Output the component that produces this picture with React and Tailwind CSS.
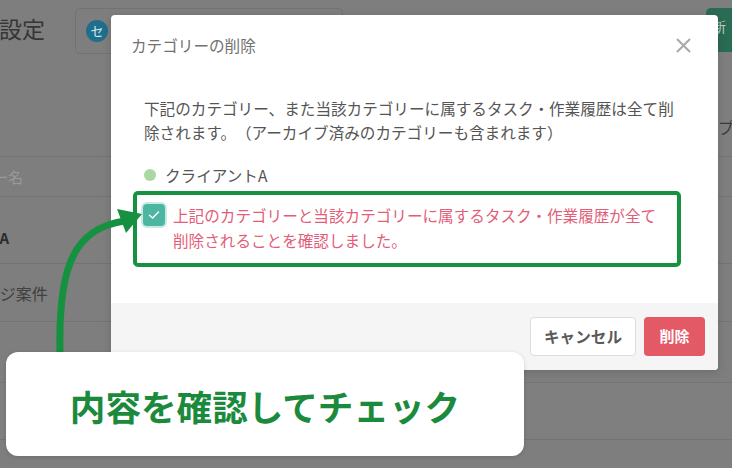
import React from "react";

const font = { fontFamily: '"Noto Sans CJK JP", "Noto Sans", sans-serif' };

export default function App() {
  return (
    <div
      className="relative w-[732px] h-[468px] overflow-hidden bg-[#7e7e7e] [text-spacing-trim:space-all]"
      style={font}
    >
      {/* background page (under dark overlay) */}
      <div className="flex flex-col w-[732px]">
        <div className="flex items-start h-[60px]">
          <div className="mt-[12px] ml-[-1px] text-[23px] leading-[32px] text-[#363636] whitespace-nowrap">
            設定
          </div>
          <div className="ml-[30px] mt-[8px] w-[268px] h-[46px] shrink-0 rounded-[5px] border border-[#727272] flex items-center pl-[10px]">
            <div className="w-[22px] h-[22px] rounded-full bg-[#1f6e8c] text-[#d8e6ec] text-[13px] leading-[22px] flex items-center justify-center">
              セ
            </div>
          </div>
          <div className="ml-[363px] mt-[8px] w-[40px] h-[44px] shrink-0 rounded-[5px] bg-[#2a6b54] text-[#b9cfc6] text-[14px] leading-[36px] pl-[6px]">
            新
          </div>
        </div>
        <div className="h-[97px] border-b border-[#737373] flex items-end pb-[17px]">
          <div className="ml-[686px] text-[16px] leading-[24px] text-[#3a3a3a] whitespace-nowrap">
            タイプ
          </div>
        </div>
        <div className="h-[40px] border-b border-[#737373] flex items-center">
          <div className="ml-[-67px] text-[15px] leading-[24px] text-[#9a9a9a] whitespace-nowrap">
            カテゴリー名
          </div>
        </div>
        <div className="h-[67px] border-b border-[#737373] pt-[29px]">
          <div className="ml-[-90px] text-[15px] leading-[24px] font-bold text-[#2c2c2c] whitespace-nowrap">
            クライアントA
          </div>
        </div>
        <div className="h-[58px] border-b border-[#737373] flex items-center">
          <div className="ml-[-32px] text-[16px] leading-[24px] text-[#404040] whitespace-nowrap">
            ページ案件
          </div>
        </div>
        <div className="h-[61px] border-b border-[#757575]" />
        <div className="h-[57px] border-b border-[#737373] bg-[#7f7f7f]" />
      </div>

      {/* modal */}
      <div className="absolute left-[111px] top-[15px] w-[607px] h-[355px] bg-white rounded-[4px] flex flex-col overflow-hidden shadow-[0_2px_8px_rgba(0,0,0,0.15)]">
        <div className="flex items-center justify-between pl-[20px] pr-[27px] pt-[18px]">
          <div className="text-[15.6px] leading-[24px] text-[#717171]">
            カテゴリーの削除
          </div>
          <svg width="15" height="15" viewBox="0 0 15 15">
            <path
              d="M1 1 L14 14 M14 1 L1 14"
              stroke="#a9a9a9"
              strokeWidth="2"
              fill="none"
            />
          </svg>
        </div>
        <div className="pl-[33px] pt-[39px] flex flex-col">
          <p className="w-[540px] text-[15.6px] leading-[24px] text-[#555555]">
            下記のカテゴリー、また当該カテゴリーに属するタスク・作業履歴は全て削除されます。（アーカイブ済みのカテゴリーも含まれます）
          </p>
          <div className="mt-[19px] flex items-center">
            <div className="w-[12px] h-[12px] rounded-full bg-[#a9d8a3]" />
            <div className="ml-[9px] text-[15.6px] leading-[24px] text-[#555555]">
              クライアントA
            </div>
          </div>
          <div className="relative mt-[16px] flex items-start">
            <div className="mt-[1px] ml-[-1px] w-[22px] h-[22px] shrink-0 rounded-[4px] bg-[#4db6a1] shadow-[0_0_0_2px_rgba(77,182,161,0.3)] flex items-center justify-center">
              <svg width="12" height="10" viewBox="0 0 12 10">
                <path
                  d="M1.5 5.2 L4.6 8 L10.5 2"
                  stroke="#ffffff"
                  strokeWidth="1.4"
                  fill="none"
                  strokeLinecap="round"
                  strokeLinejoin="round"
                />
              </svg>
            </div>
            <div className="ml-[8px] w-[490px] text-[15.6px] leading-[25px] text-[#e35d78]">
              上記のカテゴリーと当該カテゴリーに属するタスク・作業履歴が全て削除されることを確認しました。
            </div>
            <div className="absolute left-[-11px] top-[-12px] bottom-[-14px] w-[548px] border-[4px] border-[#16913f] rounded-[5px]" />
          </div>
        </div>
        <div className="mt-auto h-[67px] bg-[#f5f5f5] flex items-center justify-end gap-[8px] pr-[13px]">
          <div className="w-[106px] h-[39px] rounded-[4px] border border-[#dddddd] bg-white flex items-center justify-center text-[15.6px] font-bold text-[#5a5a5a]">
            キャンセル
          </div>
          <div className="w-[61px] h-[39px] rounded-[4px] bg-[#e35a66] flex items-center justify-center text-[15px] font-bold text-white">
            削除
          </div>
        </div>
      </div>

      {/* annotation arrow */}
      <svg
        className="absolute left-0 top-0 pointer-events-none"
        width="732"
        height="468"
        viewBox="0 0 732 468"
      >
        <path
          d="M60 352 C 58 262 76 229 124 221"
          stroke="#16913f"
          strokeWidth="7"
          fill="none"
        />
        <polygon points="117,209 126,233 142,214" fill="#16913f" />
      </svg>

      {/* annotation callout */}
      <div className="absolute left-[6px] top-[352px] w-[518px] h-[104px] bg-white rounded-[12px] shadow-[0_1px_4px_rgba(0,0,0,0.15)] flex items-center justify-center pt-[4px]">
        <div className="text-[35.6px] leading-[44px] font-bold text-[#1b8a3d] whitespace-nowrap">
          内容を確認してチェック
        </div>
      </div>
    </div>
  );
}
